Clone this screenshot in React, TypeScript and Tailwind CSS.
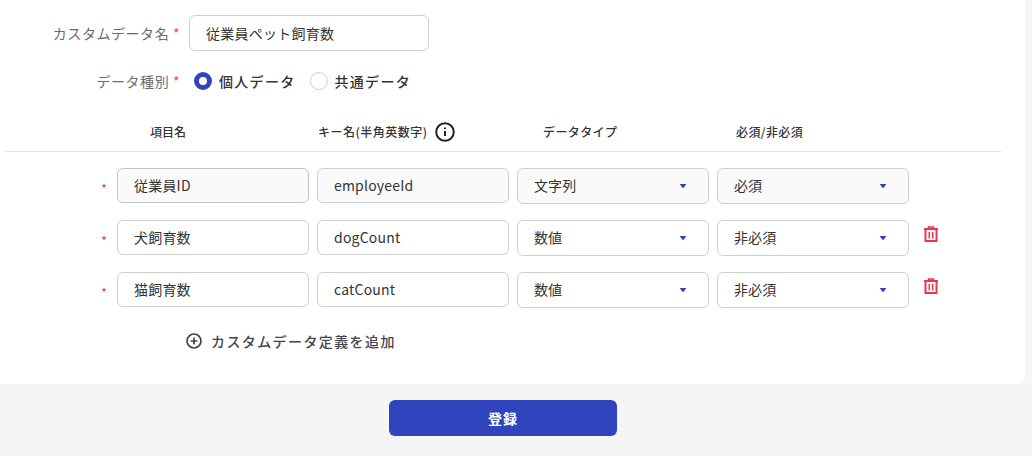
import React from "react";

function Trash() {
  return (
    <svg width="18" height="18" viewBox="0 0 18 18" fill="none" stroke="#e5384f" strokeWidth="2" className="block">
      <path d="M2 4h14" />
      <path d="M6.5 3.5V2h5v1.500" strokeWidth="1.600" />
      <path d="M3.500 4.500V16h11V4.500" />
      <path d="M7.300 7v6.500M10.700 7v6.500" strokeWidth="1.600" />
    </svg>
  );
}

function Caret() {
  return (
    <svg width="8" height="6" viewBox="0 0 8 6" className="block translate-y-[1px]">
      <path d="M0.700 1h6.600L4.900 4.600Q4 5.500 3.100 4.600Z" fill="#3045bd" />
    </svg>
  );
}

function Field({ value, disabled, dark }: { value: string; disabled?: boolean; dark?: boolean }) {
  return (
    <div className={`w-[192px] h-[35px] flex items-center pl-4 pb-[1px] border rounded-md text-sm tracking-[0.2px] text-[#333] ${dark ? "border-[#c4c4c4]" : "border-[#cfcfcf]"} ${disabled ? "bg-[#fafafa]" : "bg-white"}`}>
      {value}
    </div>
  );
}

function SelectBox({ value, disabled }: { value: string; disabled?: boolean }) {
  return (
    <div className={`w-[192px] h-9 flex items-center justify-between pl-4 pr-[21px] pb-[2px] border border-[#cfcfcf] rounded-md text-sm tracking-[0.1px] text-[#333] ${disabled ? "bg-[#fafafa]" : "bg-white"}`}>
      <span>{value}</span>
      <Caret />
    </div>
  );
}

function Row({ name, keyName, type, req, locked }: { name: string; keyName: string; type: string; req: string; locked?: boolean }) {
  return (
    <div className="flex items-start gap-2 h-9">
      <span className="w-[12px] mr-[-2px] ml-[98px] mt-[14px] text-[13px] leading-none text-[#e5486a] text-center">*</span>
      <div className="flex items-start gap-2 ml-[1px]">
        <Field value={name} disabled={locked} dark={locked} />
        <Field value={keyName} disabled={locked} />
        <SelectBox value={type} disabled={locked} />
        <SelectBox value={req} disabled={locked} />
      </div>
      {!locked && (
        <div className="ml-[5px] mt-[5px]">
          <Trash />
        </div>
      )}
    </div>
  );
}

export default function App() {
  return (
    <div
      className="w-[1032px] h-[456px] bg-[#f5f5f5] overflow-hidden flex flex-col"
      style={{ fontFamily: '"Noto Sans CJK JP", "Noto Sans", sans-serif' }}
    >
      <div className="w-[1025px] h-[384px] bg-white rounded-br-lg pt-[15px]">
        <div className="flex items-center h-9">
          <div className="w-[180px] text-right text-sm tracking-[0.55px] text-[#6b6b72]">
            カスタムデータ名 <span className="text-[#e5486a]">*</span>
          </div>
          <div className="ml-[9px] w-[240px] h-9 flex items-center pl-4 pb-[1px] border border-[#cfcfcf] rounded-md text-sm tracking-[0.25px] text-[#333]">
            従業員ペット飼育数
          </div>
        </div>

        <div className="flex items-center h-5 mt-[20px]">
          <div className="w-[180px] text-right text-sm tracking-[0.55px] text-[#6b6b72]">
            データ種別 <span className="text-[#e5486a]">*</span>
          </div>
          <div className="ml-[14px] w-[18px] h-[18px] rounded-full border-[5px] border-[#3045bd] bg-white" />
          <span className="ml-[7px] text-sm font-medium tracking-[1.3px] text-[#333]">個人データ</span>
          <div className="ml-[14px] w-[18px] h-[18px] rounded-full border border-[#cfcfcf] bg-white" />
          <span className="ml-[7px] text-sm font-medium tracking-[1.3px] text-[#333]">共通データ</span>
        </div>

        <div className="ml-[5px] w-[996px] h-[42px] mt-[19px] pt-[10px] border-b border-[#e2e2e2] flex items-start text-xs font-medium tracking-[0.5px] text-[#333]">
          <div className="ml-[145px] w-[168px] leading-[24px] tracking-normal">項目名</div>
          <div className="w-[225px] flex items-center gap-[7px] h-6">
            <span>キー名(半角英数字)</span>
            <svg width="20" height="20" viewBox="0 0 20 20" fill="none" stroke="#222" className="block">
              <circle cx="10" cy="10" r="8.800" strokeWidth="2" />
              <path d="M10 9v5" strokeWidth="2" />
              <path d="M10 5.500v1.800" strokeWidth="2" />
            </svg>
          </div>
          <div className="w-[193px] leading-[24px] tracking-[0.4px]">データタイプ</div>
          <div className="leading-[24px] tracking-[0.4px]">必須/非必須</div>
        </div>

        <div className="flex flex-col gap-4 mt-4">
          <Row name="従業員ID" keyName="employeeId" type="文字列" req="必須" locked />
          <Row name="犬飼育数" keyName="dogCount" type="数値" req="非必須" />
          <Row name="猫飼育数" keyName="catCount" type="数値" req="非必須" />
        </div>

        <div className="flex items-center ml-[186px] mt-[23px] h-5 gap-[9px] text-sm font-medium tracking-[1.4px] text-[#44464f]">
          <svg width="16" height="16" viewBox="0 0 16 16" fill="none" stroke="#3f4250" strokeWidth="1.700" className="block">
            <circle cx="8" cy="8" r="7" />
            <path d="M8 4.500v7M4.500 8h7" />
          </svg>
          <span>カスタムデータ定義を追加</span>
        </div>
      </div>

      <div className="flex justify-center w-[1006px] mt-4">
        <button className="w-[228px] h-9 rounded-md bg-[#3045bd] text-white text-sm font-bold tracking-[1px]">
          登録
        </button>
      </div>
    </div>
  );
}
